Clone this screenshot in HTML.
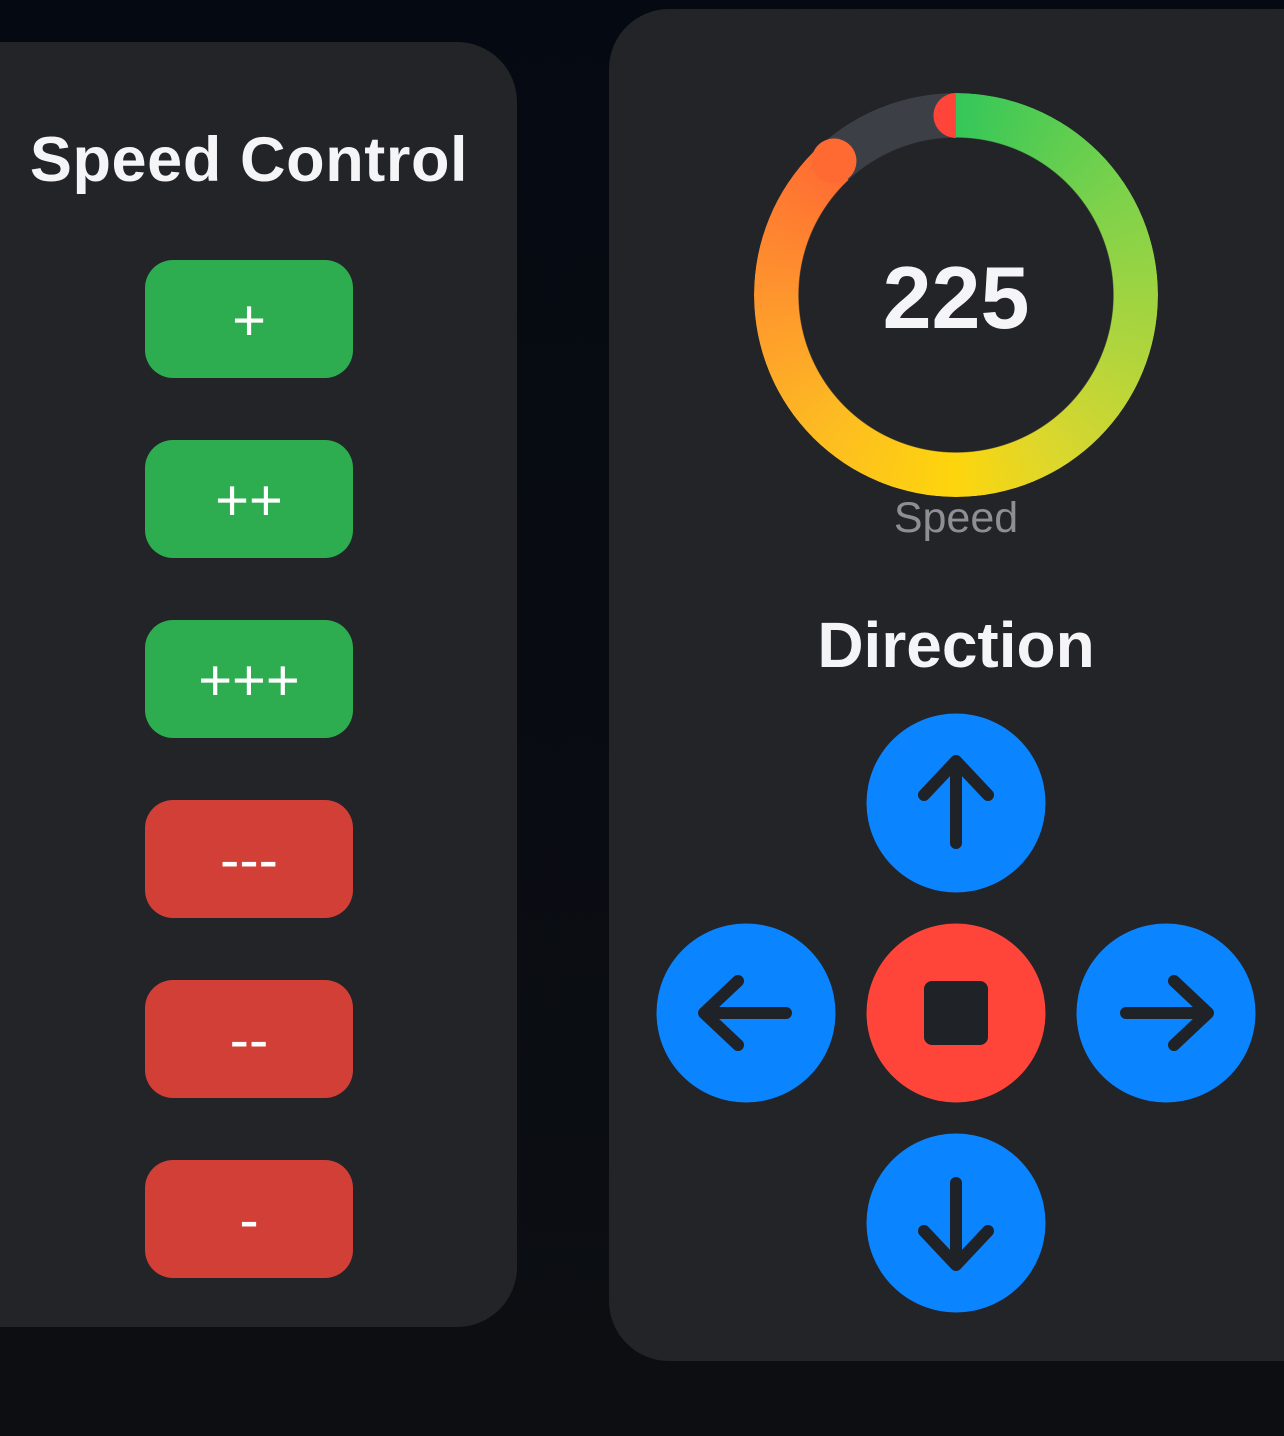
<!DOCTYPE html>
<html><head><meta charset="utf-8"><style>
*{margin:0;padding:0;box-sizing:border-box}
body{width:1284px;height:1436px;overflow:hidden;background:linear-gradient(#050a12,#0c0e12);font-family:"Liberation Sans",sans-serif;position:relative}
.card{position:absolute;background:#222428;border-radius:60px}
.t{position:absolute;color:#f5f5f7;font-weight:bold;text-align:center;white-space:nowrap}
.b{position:absolute;left:145px;width:208px;height:118px;border-radius:28px;color:#fff;font-size:58px;text-align:center;line-height:122px;letter-spacing:0}
.g{background:#2dad4f}.r{background:#d13f36}
.ring{position:absolute;left:754px;top:93px;width:404px;height:404px;border-radius:50%;
background:conic-gradient(#34c759 0deg,#7fd24a 60deg,#b2d53c 110deg,#ddd72c 150deg,#fdd50d 180deg,#fdbb22 225deg,#fe952e 270deg,#ff7a31 300deg,#ff6b33 317deg,#3c3f45 317deg,#3c3f45 360deg);
-webkit-mask:radial-gradient(circle,transparent 157px,#000 158px);mask:radial-gradient(circle,transparent 157px,#000 158px)}
.c{position:absolute;width:179px;height:179px;border-radius:50%}
</style></head><body>
<div class="card" style="left:-60px;top:42px;width:577px;height:1285px"></div>
<div class="card" style="left:609px;top:9px;width:740px;height:1352px"></div>
<div class="t" style="left:0;width:498px;top:124px;font-size:63px;letter-spacing:0.6px">Speed Control</div>
<div class="b g" style="top:260px">+</div>
<div class="b g" style="top:440px">++</div>
<div class="b g" style="top:620px">+++</div>
<div class="b r" style="top:800px">---</div>
<div class="b r" style="top:980px">--</div>
<div class="b r" style="top:1160px">-</div>
<div class="ring"></div>
<svg style="position:absolute;left:0;top:0" width="1284" height="1436">
<circle cx="834" cy="161" r="22.5" fill="#ff6a33"/>
<path d="M956 93 A22.5 22.5 0 0 0 956 138 Z" fill="#ff453a"/>
<circle cx="956" cy="803" r="89.5" fill="#0a84ff"/>
<circle cx="746" cy="1013" r="89.5" fill="#0a84ff"/>
<circle cx="956" cy="1013" r="89.5" fill="#ff453a"/>
<circle cx="1166" cy="1013" r="89.5" fill="#0a84ff"/>
<circle cx="956" cy="1223" r="89.5" fill="#0a84ff"/>
<g stroke="#1f2226" stroke-width="12" stroke-linecap="round" stroke-linejoin="round" fill="none">
<path d="M956 843V764M924 795L956 761L988 795"/>
<path d="M956 1183V1262M924 1231L956 1265L988 1231"/>
<path d="M786 1013H707M738 981L704 1013L738 1045"/>
<path d="M1126 1013H1205M1174 981L1208 1013L1174 1045"/>
</g>
<rect x="924" y="981" width="64" height="64" rx="8" fill="#1f2226"/>
</svg>
<div class="t" style="left:756px;width:400px;top:247px;font-size:88px">225</div>
<div class="t" style="left:756px;width:400px;top:494px;font-size:43px;font-weight:normal;color:#8e8e93">Speed</div>
<div class="t" style="left:756px;width:400px;top:608px;font-size:64px">Direction</div>
</body></html>
